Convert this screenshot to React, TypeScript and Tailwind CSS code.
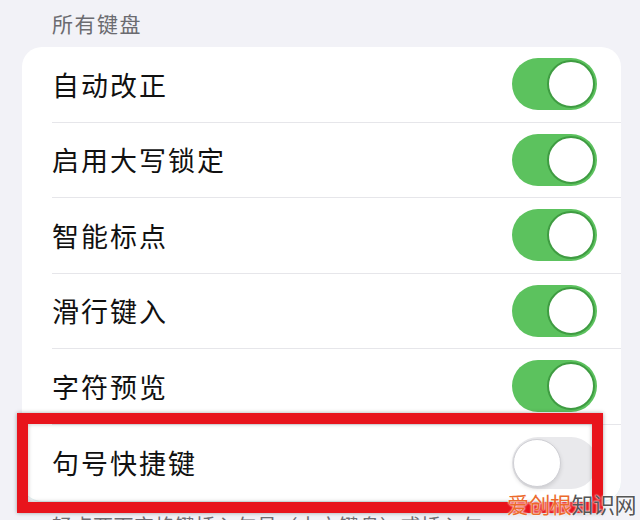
import React from 'react'

type Row = { label: string; on: boolean }

const rows: Row[] = [
  { label: '自动改正', on: true },
  { label: '启用大写锁定', on: true },
  { label: '智能标点', on: true },
  { label: '滑行键入', on: true },
  { label: '字符预览', on: true },
  { label: '句号快捷键', on: false },
]

const cjk = { fontFamily: '"Noto Sans CJK SC", "Noto Sans", sans-serif' }

function Toggle({ on }: { on: boolean }) {
  return (
    <div
      className={
        on
          ? 'relative w-[85px] h-[52px] rounded-full bg-[#5cc25e] shrink-0'
          : 'relative w-[85px] h-[52px] rounded-full bg-[#e9e9ec] shrink-0'
      }
    >
      <div
        className={
          on
            ? 'absolute top-[2px] right-[2px] w-[48px] h-[48px] rounded-full bg-white border-2 border-[#3f9c42]'
            : 'absolute top-[2px] left-[1px] w-[48px] h-[48px] rounded-full bg-white border border-[#cfcfd4] shadow-[0_2px_4px_rgba(0,0,0,0.12)]'
        }
      />
    </div>
  )
}

export default function App() {
  return (
    <div
      className="relative w-[640px] h-[520px] overflow-hidden bg-[#f2f2f7]"
      style={cjk}
    >
      <p className="pl-[52px] pt-[9px] text-[21px] leading-[28px] tracking-[1.5px] text-[#6b6b70]">
        所有键盘
      </p>

      <div className="ml-[22px] mt-[10px] w-[599px] rounded-[20px] bg-white overflow-hidden border-b border-[#dcefee]">
        {rows.map((row, i) => (
          <div key={row.label} className="pl-[30px]">
            <div
              className={
                i < rows.length - 1
                  ? 'h-[75.5px] flex items-center justify-between pr-[24px] border-b border-[#e6e6ea]'
                  : 'h-[76px] flex items-center justify-between pr-[24px]'
              }
            >
              <span className="text-[27px] leading-none tracking-[2px] text-[#111]">
                {row.label}
              </span>
              <Toggle on={row.on} />
            </div>
          </div>
        ))}
      </div>

      <p className="w-[500px] pl-[52px] pt-[9px] text-[20px] leading-[30px] tracking-[0.5px] text-[#6d6d72]">
        轻点两下空格键插入句号（中文键盘）或插入句点后跟空格。
      </p>

      {/* highlight frame around the last row */}
      <div className="absolute left-[17px] top-[413px] w-[586px] h-[100px] border-[11px] border-[#e8141c] shadow-[0_0_4px_rgba(0,0,0,0.35),inset_0_0_4px_rgba(0,0,0,0.25)]" />

      {/* site watermark */}
      <div className="absolute left-[507px] top-[490px] text-[22px] leading-[26px] tracking-[-0.5px] [text-shadow:0_0_2px_#fff,0_0_2px_#fff]">
        <span className="text-[#ec6a2c]">爱创根</span>
        <span className="text-[#555]">知识网</span>
      </div>
    </div>
  )
}
